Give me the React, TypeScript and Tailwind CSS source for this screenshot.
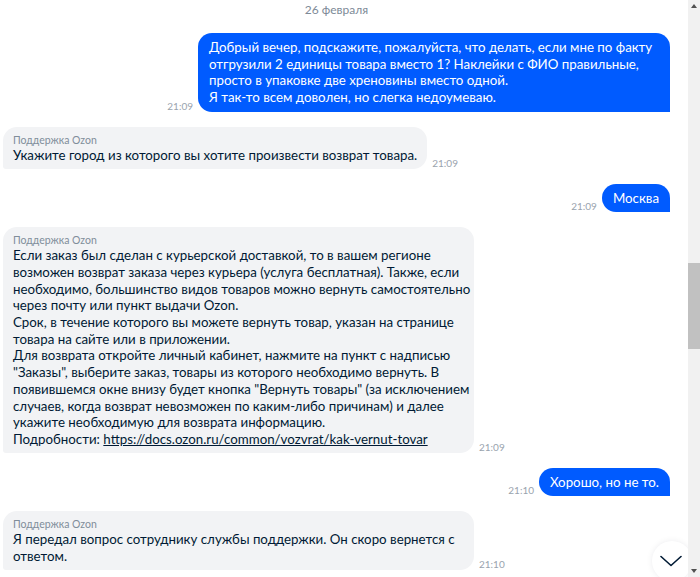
type Msg =
  | { id: number; from: "me"; time: string; lines: string[]; wide?: boolean }
  | { id: number; from: "ozon"; time: string; lines: string[]; link?: string; wide?: boolean };

const messages: Msg[] = [
  {
    id: 1,
    from: "me",
    time: "21:09",
    wide: true,
    lines: [
      "Добрый вечер, подскажите, пожалуйста, что делать, если мне по факту",
      "отгрузили 2 единицы товара вместо 1? Наклейки с ФИО правильные,",
      "просто в упаковке две хреновины вместо одной.",
      "Я так-то всем доволен, но слегка недоумеваю.",
    ],
  },
  {
    id: 2,
    from: "ozon",
    time: "21:09",
    lines: ["Укажите город из которого вы хотите произвести возврат товара."],
  },
  { id: 3, from: "me", time: "21:09", lines: ["Москва"] },
  {
    id: 4,
    from: "ozon",
    time: "21:09",
    wide: true,
    lines: [
      "Если заказ был сделан с курьерской доставкой, то в вашем регионе",
      "возможен возврат заказа через курьера (услуга бесплатная). Также, если",
      "необходимо, большинство видов товаров можно вернуть самостоятельно",
      "через почту или пункт выдачи Ozon.",
      "Срок, в течение которого вы можете вернуть товар, указан на странице",
      "товара на сайте или в приложении.",
      "Для возврата откройте личный кабинет, нажмите на пункт с надписью",
      "\"Заказы\", выберите заказ, товары из которого необходимо вернуть. В",
      "появившемся окне внизу будет кнопка \"Вернуть товары\" (за исключением",
      "случаев, когда возврат невозможен по каким-либо причинам) и далее",
      "укажите необходимую для возврата информацию.",
    ],
    link: "https://docs.ozon.ru/common/vozvrat/kak-vernut-tovar",
  },
  { id: 5, from: "me", time: "21:10", lines: ["Хорошо, но не то."] },
  {
    id: 6,
    from: "ozon",
    time: "21:10",
    wide: true,
    lines: ["Я передал вопрос сотруднику службы поддержки. Он скоро вернется с", "ответом."],
  },
];

function Time({ value }: { value: string }) {
  return <span className="shrink-0 text-[10px] leading-[12px] text-[#99a3ae]">{value}</span>;
}

function Bubble({ msg }: { msg: Msg }) {
  if (msg.from === "me") {
    return (
      <div className="flex items-end justify-end gap-[5px]">
        <Time value={msg.time} />
        <div
          className={`rounded-t-[14px] rounded-bl-[14px] bg-[#005bff] px-[11px] py-[6px] text-[13.3px] leading-[16.7px] text-white ${
            msg.wide ? "w-[472px]" : ""
          }`}
        >
          {msg.lines.map((line) => (
            <span key={line} className="block whitespace-nowrap">
              {line}
            </span>
          ))}
        </div>
      </div>
    );
  }

  return (
    <div className="flex items-end gap-[5px]">
      <div
        className={`rounded-t-[14px] rounded-br-[14px] rounded-bl-[3px] bg-[#f2f3f5] px-[10px] pt-[6px] pb-[5px] ${
          msg.wide ? "w-[471px]" : ""
        }`}
      >
        <p className="text-[10.5px] leading-[14px] text-[#808d9a]">Поддержка Ozon</p>
        <div className="text-[13.3px] leading-[16.7px] text-[#001a34]">
          {msg.lines.map((line) => (
            <span key={line} className="block whitespace-nowrap">
              {line}
            </span>
          ))}
          {msg.link && (
            <span className="block whitespace-nowrap">
              Подробности: <span className="underline">{msg.link}</span>
            </span>
          )}
        </div>
      </div>
      <Time value={msg.time} />
    </div>
  );
}

export default function App() {
  return (
    <div className="flex h-[577px] w-[700px] overflow-hidden bg-white font-['Lato','Noto_Sans',sans-serif]">
      <div className="relative flex-1 overflow-hidden">
        <div className="flex flex-col gap-[15px] pl-[3px] pr-[18px] pt-[2px]">
          <p className="text-center text-[12px] leading-[16px] text-[#7d8a97]">26 февраля</p>
          {messages.map((m) => (
            <Bubble key={m.id} msg={m} />
          ))}
        </div>

        <button className="absolute bottom-[-4px] right-[-4px] flex h-10 w-10 items-center justify-center rounded-full bg-white shadow-[0_0_6px_rgba(0,26,52,0.08)]">
          <svg width="22" height="12" viewBox="0 0 22 12" fill="none" className="-ml-[2px]">
            <path d="M1 1.5 L11 10.5 L21 1.5" stroke="#001a34" strokeWidth="1.6" strokeLinecap="round" strokeLinejoin="round" />
          </svg>
        </button>
      </div>

      {/* fake scrollbar */}
      <div className="flex w-[12px] flex-col bg-[#f1f1f1]">
        <div className="flex h-[12px] items-center justify-center">
          <span className="h-0 w-0 border-x-[3.5px] border-b-[4px] border-x-transparent border-b-[#505050]" />
        </div>
        <div className="mt-[251px] h-[86px] bg-[#c1c1c1]" />
        <div className="flex-1" />
        <div className="flex h-[12px] items-center justify-center">
          <span className="h-0 w-0 border-x-[3.5px] border-t-[4px] border-x-transparent border-t-[#505050]" />
        </div>
      </div>
    </div>
  );
}
